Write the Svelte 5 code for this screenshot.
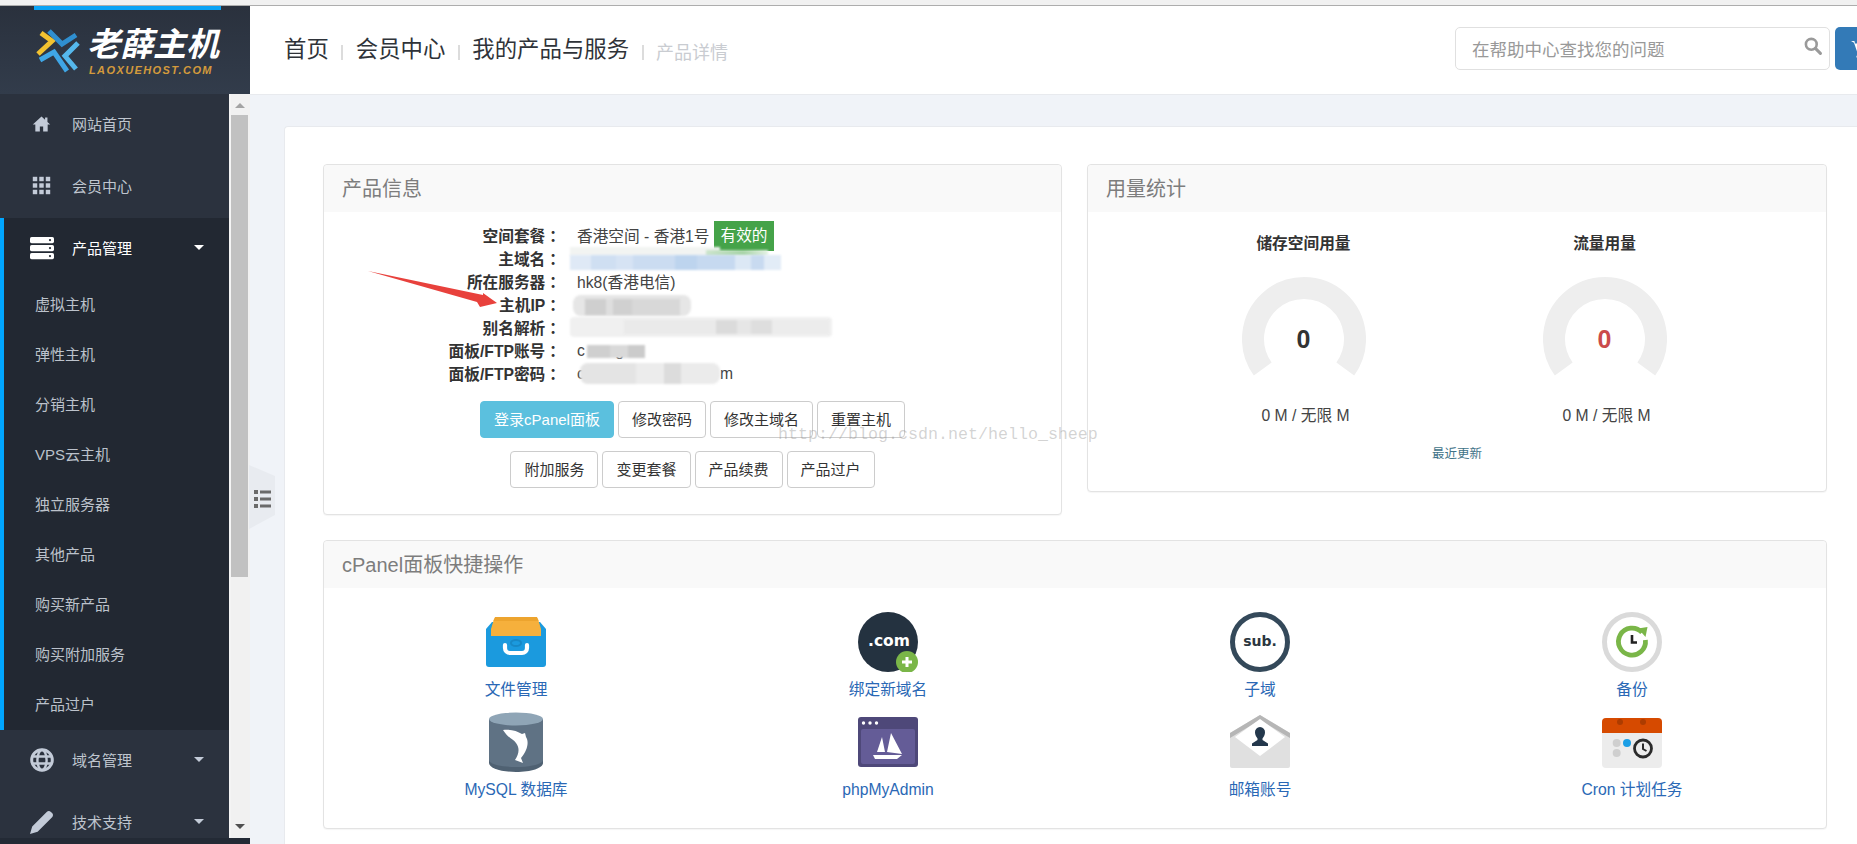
<script>
  const subs = ['虚拟主机','弹性主机','分销主机','VPS云主机','独立服务器','其他产品','购买新产品','购买附加服务','产品过户'];
  const info = [
    ['空间套餐','香港空间 - 香港1号',true],
    ['主域名','',false],
    ['所在服务器','hk8(香港电信)',false],
    ['主机IP','',false],
    ['别名解析','',false],
    ['面板/FTP账号','c       g',false],
    ['面板/FTP密码','c                               m',false]
  ];
  const row1 = ['修改密码','修改主域名','重置主机'];
  const row2 = ['附加服务','变更套餐','产品续费','产品过户'];
  const gauges = [
    {t:'储存空间用量',red:false},
    {t:'流量用量',red:true}
  ];
  const r = 51;
  const a0 = 144*Math.PI/180, a1 = 36*Math.PI/180;
  const arcPath = `M ${62+r*Math.cos(a0)} ${62+r*Math.sin(a0)} A ${r} ${r} 0 1 1 ${62+r*Math.cos(a1)} ${62+r*Math.sin(a1)}`;
</script>

<div class="page">
  <div class="strip"></div>
  <div class="body">
    <aside class="side">
      <div class="brand">
        <div class="brandbar"></div>
        <svg class="mark" viewBox="0 0 50 50" width="50" height="50" aria-hidden="true">
          <polyline points="8,5 19,13 5,26" fill="none" stroke="#f2c230" stroke-width="5"/>
          <polyline points="16,3 29,16 43,7" fill="none" stroke="#2f8fd0" stroke-width="5"/>
          <polyline points="45,15 32,28 43,41" fill="none" stroke="#55b8ec" stroke-width="5"/>
          <polyline points="7,32 21,24 34,43" fill="none" stroke="#3fa6e6" stroke-width="5"/>
        </svg>
        <div class="brandtext">
          <div class="bt1">老薛主机</div>
          <div class="bt2">LAOXUEHOST.COM</div>
        </div>
      </div>
      <div class="navwrap">
        <nav class="nav">
          <a class="row">
            <svg class="ic" viewBox="0 0 24 24" aria-hidden="true"><path d="M12 3 1 13.2h3.2V22h5.7v-6.2h4.2V22h5.700v-8.800H23L19.500 10V4.500h-3v2.700z" fill="#c3cbd8"/></svg>
            <span>网站首页</span>
          </a>
          <a class="row">
            <svg class="ic" viewBox="0 0 24 24" aria-hidden="true"><g fill="#c3cbd8"><rect x="1" y="1" width="5.6" height="5.6"/><rect x="9.2" y="1" width="5.6" height="5.6"/><rect x="17.4" y="1" width="5.6" height="5.6"/><rect x="1" y="9.2" width="5.6" height="5.6"/><rect x="9.2" y="9.2" width="5.6" height="5.6"/><rect x="17.4" y="9.2" width="5.6" height="5.6"/><rect x="1" y="17.4" width="5.6" height="5.6"/><rect x="9.2" y="17.4" width="5.6" height="5.6"/><rect x="17.4" y="17.4" width="5.6" height="5.6"/></g></svg>
            <span>会员中心</span>
          </a>
          <div class="active">
            <a class="row cur">
              <svg class="ic big" viewBox="0 0 24 22" aria-hidden="true"><g fill="#fff"><rect x="0" y="0" width="24" height="6.2" rx="1.6"/><rect x="0" y="8" width="24" height="6.2" rx="1.6"/><rect x="0" y="16" width="24" height="6.2" rx="1.6"/></g><g fill="#222832"><circle cx="20" cy="3.1" r="1.1"/><circle cx="20" cy="11.1" r="1.1"/><circle cx="20" cy="19.1" r="1.1"/></g></svg>
              <span>产品管理</span>
              <i class="caret white"></i>
            </a>
            {#each subs as s}
              <a class="sub">{s}</a>
            {/each}
          </div>
          <a class="row">
            <svg class="ic big" viewBox="0 0 24 24" aria-hidden="true"><circle cx="12" cy="12" r="10.3" fill="none" stroke="#c3cbd8" stroke-width="3"/><ellipse cx="12" cy="12" rx="4.6" ry="10" fill="none" stroke="#c3cbd8" stroke-width="2.4"/><path d="M2 8.5h20M2 15.5h20" stroke="#c3cbd8" stroke-width="2.4"/></svg>
            <span>域名管理</span>
            <i class="caret"></i>
          </a>
          <a class="row">
            <svg class="ic big" viewBox="0 0 24 24" aria-hidden="true"><path d="M0 24l2.200-7.600L16.700 1.900c1.200-1.200 3-1.200 4.200 0l1.200 1.200c1.200 1.200 1.200 3 0 4.200L7.600 21.800z" fill="#c3cbd8"/></svg>
            <span>技术支持</span>
            <i class="caret"></i>
          </a>
        </nav>
        <div class="sb">
          <i class="up"></i>
          <div class="thumb"></div>
          <i class="down"></i>
        </div>
      </div>
      <div class="sidefoot"></div>
    </aside>

    <main class="main">
      <header class="head">
        <div class="crumbs">
          <a>首页</a><i></i><a>会员中心</a><i></i><a>我的产品与服务</a><i></i><span>产品详情</span>
        </div>
        <div class="search">
          <span class="ph">在帮助中心查找您的问题</span>
          <svg viewBox="0 0 18 18" width="18" height="18" aria-hidden="true"><circle cx="7.3" cy="7.3" r="5.4" fill="none" stroke="#9a9a9a" stroke-width="2.6"/><path d="M11.4 11.4 16.4 16.4" stroke="#9a9a9a" stroke-width="3" stroke-linecap="round"/></svg>
        </div>
        <button class="cart" aria-label="cart">
          <svg viewBox="0 0 20 18" width="20" height="18" aria-hidden="true"><path d="M0 1h3.400l.6 2.400H19l-2 8H6L3 2.800M7 15a1.600 1.600 0 1 0 .1 0zM15 15a1.600 1.600 0 1 0 .1 0z" fill="#fff"/></svg>
        </button>
      </header>

      <div class="wrap">
        <div class="handle">
          <svg viewBox="0 0 26 64" width="26" height="64" aria-hidden="true">
            <path d="M0 0 26 11V50L0 64z" fill="#e8ebf0"/>
            <g fill="#6a6a6a"><rect x="5" y="25" width="4" height="4"/><rect x="5" y="32" width="4" height="4"/><rect x="5" y="39" width="4" height="4"/><rect x="11" y="25.500" width="11" height="3"/><rect x="11" y="32.500" width="11" height="3"/><rect x="11" y="39.500" width="11" height="3"/></g>
          </svg>
        </div>
        <div class="card">
          <div class="top">
            <section class="panel">
              <h3>产品信息</h3>
              <div class="infobody">
                <div class="info">
                  {#each info as [k, v, badge]}
                    <div class="irow">
                      <b>{k}<span class="colon">：</span></b>
                      <span class="v">{v}{#if badge}<em>有效的</em>{/if}</span>
                    </div>
                  {/each}
                  <div class="m host-top"></div>
                  <div class="m host-green"></div>
                  <div class="m host"></div>
                  <div class="m ip2"></div>
                  <div class="m ip"></div>
                  <div class="m alias2"></div>
                  <div class="m alias"></div>
                  <div class="m acct"></div>
                  <div class="m pwd"></div>
                </div>
                <div class="btns">
                  <button class="btn pri">登录cPanel面板</button>
                  {#each row1 as b}<button class="btn">{b}</button>{/each}
                </div>
                <div class="btns second">
                  {#each row2 as b}<button class="btn">{b}</button>{/each}
                </div>
              </div>
            </section>

            <section class="panel">
              <h3>用量统计</h3>
              <div class="usage">
                <div class="gauges">
                  {#each gauges as g}
                    <div class="g">
                      <h4>{g.t}</h4>
                      <svg viewBox="0 0 124 124" width="124" height="124" aria-hidden="true">
                        <path d={arcPath} fill="none" stroke="#eeeeee" stroke-width="22"/>
                      </svg>
                      <div class="num" class:red={g.red}>0</div>
                      <p>0 M / 无限 M</p>
                    </div>
                  {/each}
                </div>
                <a class="upd">最近更新</a>
              </div>
            </section>
          </div>

          <section class="panel quick">
            <h3>cPanel面板快捷操作</h3>
            <div class="grid">
              <a class="tool">
                <svg viewBox="0 0 60 60" width="60" height="60" aria-hidden="true">
                  <path d="M0 17 6 10h48l6 7v35a3 3 0 0 1-3 3H3a3 3 0 0 1-3-3z" fill="#1b9ade"/>
                  <path d="M8 7 10 5h40l2 2 3 10v7H5v-7z" fill="#f6b03c"/>
                  <path d="M9 5h42l1.500 4h-45z" fill="#eda42e"/>
                  <path d="M19 33v3a5 5 0 0 0 5 5h12a5 5 0 0 0 5-5v-3" fill="none" stroke="#fff" stroke-width="4.200" stroke-linecap="round"/>
                  <ellipse cx="30" cy="31" rx="5" ry="3" fill="none" stroke="#1788c6" stroke-width="2"/>
                </svg>
                <span>文件管理</span>
              </a>
              <a class="tool">
                <svg viewBox="0 0 60 60" width="60" height="60" aria-hidden="true">
                  <circle cx="30" cy="30" r="30" fill="#243240"/>
                  <text x="31" y="34" text-anchor="middle" class="svgt" fill="#fff" font-size="15.500">.com</text>
                  <circle cx="49" cy="50" r="11" fill="#7ab648"/>
                  <path d="M49 45v10M44 50h10" stroke="#fff" stroke-width="3"/>
                </svg>
                <span>绑定新域名</span>
              </a>
              <a class="tool">
                <svg viewBox="0 0 60 60" width="60" height="60" aria-hidden="true">
                  <circle cx="30" cy="30" r="27.500" fill="#fff" stroke="#34495a" stroke-width="5"/>
                  <text x="30" y="34" text-anchor="middle" class="svgt" fill="#2b3640" font-size="14">sub.</text>
                </svg>
                <span>子域</span>
              </a>
              <a class="tool">
                <svg viewBox="0 0 60 60" width="60" height="60" aria-hidden="true">
                  <circle cx="30" cy="30" r="27.500" fill="#fff" stroke="#dadada" stroke-width="5"/>
                  <path d="M40 20.500A13.500 13.500 0 1 0 43.400 28" fill="none" stroke="#7ab648" stroke-width="4.800"/>
                  <path d="M36 16.500 45.500 15 43.500 25z" fill="#7ab648"/>
                  <path d="M30 23v7.500h5" fill="none" stroke="#222" stroke-width="2.600"/>
                </svg>
                <span>备份</span>
              </a>
              <a class="tool">
                <svg viewBox="0 0 60 60" width="60" height="60" aria-hidden="true">
                  <path d="M3 7h54v44c0 5-12 9-27 9S3 56 3 51z" fill="#4f6172"/>
                  <path d="M3 7h54v41c0 4-12 7-27 7S3 52 3 48z" fill="#5f7284"/>
                  <ellipse cx="30" cy="7" rx="27" ry="6.500" fill="#8fa5b6"/>
                  <path d="M17 18C24 17 31 19 36 22L39 21 40 25C43 29 42 38 35 46L37 51 29 48C33 42 34 36 30 31 27 27 22 26 17 18z" fill="#fff"/>
                </svg>
                <span>MySQL 数据库</span>
              </a>
              <a class="tool">
                <svg viewBox="0 0 60 60" width="60" height="60" aria-hidden="true">
                  <rect x="0" y="5" width="60" height="50" rx="3" fill="#4e4879"/>
                  <rect x="3" y="17" width="54" height="35" rx="2" fill="#645c97"/>
                  <g fill="#fff"><circle cx="5.500" cy="11" r="1.700"/><circle cx="12" cy="11" r="1.700"/><circle cx="18.500" cy="11" r="1.700"/>
                  <path d="M33 21 44 42 29 40zM24 25 27 40 19 40zM15 43H44L39 47H17z"/></g>
                </svg>
                <span>phpMyAdmin</span>
              </a>
              <a class="tool">
                <svg viewBox="0 0 60 60" width="60" height="60" aria-hidden="true">
                  <path d="M30 3 60 21v33a2 2 0 0 1-2 2H2a2 2 0 0 1-2-2V21z" fill="#e0e0e0"/>
                  <path d="M30 3 60 21v5L30 8 0 26v-5z" fill="#b6b6b6"/>
                  <path d="M30 7 55 25 30 44 5 25z" fill="#fff"/>
                  <path d="M30 15a5 5 0 0 1 5 5.500c0 2.500-1.500 4.500-2.500 6v1.500l5.500 3.500v2.500H22v-2.500l5.500-3.500V26.500c-1-1.500-2.500-3.500-2.500-6A5 5 0 0 1 30 15z" fill="#24384c"/>
                </svg>
                <span>邮箱账号</span>
              </a>
              <a class="tool">
                <svg viewBox="0 0 60 60" width="60" height="60" aria-hidden="true">
                  <rect x="0" y="6" width="60" height="50" rx="4" fill="#ececec"/>
                  <path d="M0 21V10a4 4 0 0 1 4-4h52a4 4 0 0 1 4 4v11z" fill="#d64a00"/>
                  <circle cx="18" cy="10" r="3" fill="#ad3c00"/><circle cx="41" cy="10" r="3" fill="#ad3c00"/>
                  <circle cx="14.700" cy="31" r="4" fill="#cfcfcf"/><circle cx="14.700" cy="41" r="4" fill="#cfcfcf"/>
                  <circle cx="25" cy="31" r="4" fill="#1c9fe6"/>
                  <circle cx="41" cy="36.500" r="8.500" fill="none" stroke="#2a2a2a" stroke-width="2.800"/>
                  <path d="M41 31.500v5.500l3.500 2" fill="none" stroke="#2a2a2a" stroke-width="2"/>
                </svg>
                <span>Cron 计划任务</span>
              </a>
            </div>
          </section>
        </div>
      </div>
    </main>
  </div>

  <svg class="arrow" viewBox="0 0 140 40" width="140" height="40" aria-hidden="true">
    <path d="M0 0 115 24 115 22 129 32 112 36 109 31z" fill="#e8413c"/>
  </svg>
  <div class="wm">http://blog.csdn.net/hello_sheep</div>
</div>

<style>
  :global(body){margin:0;font-family:"Liberation Sans","Noto Sans CJK SC",sans-serif;}
  *{box-sizing:border-box;}
  a{text-decoration:none;}
  .page{position:relative;width:1857px;height:844px;overflow:hidden;display:flex;flex-direction:column;background:#fff;}
  .strip{height:6px;flex:none;background:#f1f1f1;border-bottom:1px solid #adadad;}
  .body{flex:1;display:flex;min-height:0;}

  .side{width:250px;flex:none;display:flex;flex-direction:column;background:#2b323e;}
  .brand{position:relative;height:88px;flex:none;background:linear-gradient(180deg,#2a313d,#323c4b);display:flex;align-items:flex-start;padding:20px 0 0 33px;gap:4px;}
  .brandbar{position:absolute;left:34px;top:0;width:187px;height:4px;background:#0aa3f5;}
  .mark{flex:none;margin-top:2px;}
  .brandtext{display:flex;flex-direction:column;}
  .bt1{font-size:33px;line-height:36px;font-weight:700;font-style:italic;color:#fff;white-space:nowrap;margin-top:1px;}
  .bt2{font-size:11px;line-height:12px;font-weight:700;font-style:italic;color:#d39a3c;letter-spacing:1.400px;white-space:nowrap;margin:1px 0 0 2px;}

  .navwrap{height:744px;flex:none;display:flex;}
  .nav{width:229px;flex:none;overflow:hidden;background:#2b323e;}
  .row{height:62px;display:flex;align-items:center;padding:0 0 3px 32px;position:relative;color:#bfc5ce;font-size:15px;}
  .row span{position:absolute;left:72px;}
  .row.cur{color:#fff;}
  .ic{width:19px;height:19px;flex:none;}
  .ic.big{width:24px;height:24px;margin-left:-2px;}
  .caret{position:absolute;left:194px;top:27px;width:0;height:0;border-left:5.500px solid transparent;border-right:5.500px solid transparent;border-top:5.500px solid #c3cbd8;}
  .caret.white{border-top-color:#fff;}
  .active{background:#222832;border-left:4px solid #00a6ff;height:512px;}
  .active .row{margin-left:-4px;}
  .sub{display:block;height:50px;line-height:50px;padding-left:31px;color:#bcc2cb;font-size:15px;}
  .sb{width:21px;flex:none;background:#f1f1f1;border-left:2px solid #f4f4f4;position:relative;padding:21px 2px 0 0;}
  .thumb{height:462px;background:#c1c1c1;}
  .up,.down{position:absolute;left:4px;width:0;height:0;border-left:5px solid transparent;border-right:5px solid transparent;}
  .up{top:9px;border-bottom:5px solid #a3a3a3;}
  .down{top:730px;border-top:5px solid #505050;}
  .sidefoot{flex:1;background:#232a35;}

  .main{flex:1;min-width:0;display:flex;flex-direction:column;background:#f0f3f8;position:relative;}
  .head{height:89px;flex:none;background:#fff;border-bottom:1px solid #e8eaee;display:flex;align-items:center;padding-left:34px;}
  .crumbs{display:flex;align-items:center;gap:12.500px;flex:1;}
  .crumbs a{font-size:22.400px;color:#2f3339;line-height:30px;}
  .crumbs i{width:2px;height:15px;background:#dcdcdc;margin-top:4px;}
  .crumbs span{font-size:18px;color:#c9ccd1;margin-top:1px;}
  .search{width:375px;height:43px;margin-top:-3px;flex:none;border:1px solid #e0e0e0;border-radius:5px;display:flex;align-items:center;justify-content:space-between;padding:0 7px 0 16px;background:#fff;}
  .ph{font-size:17.500px;color:#999;white-space:nowrap;}
  .search svg{margin-top:-5px;}
  .cart{width:40px;height:43px;margin:-3px -18px 0 5px;flex:none;border:0;border-radius:5px 0 0 5px;background:#337ab7;padding:0 0 0 16px;display:flex;align-items:center;}

  .wrap{flex:1;min-height:0;padding:31px 0 0 34px;position:relative;}
  .handle{position:absolute;left:-1px;top:370px;width:26px;height:64px;}
  .card{height:100%;background:#fff;border-left:1px solid #e8eaee;border-top:1px solid #e8eaee;border-radius:4px 0 0 0;padding:37px 30px 0 38px;}
  .top{display:grid;grid-template-columns:739px 740px;gap:25px;align-items:start;}
  .panel{border:1px solid #e3e3e3;border-radius:4px;background:#fff;box-shadow:0 1px 1px rgba(0,0,0,.04);}
  h3{margin:0;height:47px;line-height:48px;padding-left:18px;font-size:20px;font-weight:400;color:#7d7d7d;background:#f9f9f9;border-radius:4px 4px 0 0;}

  .infobody{padding:12px 0 26px;}
  .info{position:relative;}
  .irow{height:23px;display:grid;grid-template-columns:237px 1fr;column-gap:16px;align-items:center;}
  .irow b{text-align:right;font-size:15.700px;font-weight:700;color:#333;white-space:nowrap;}
  .colon{font-family:"Noto Sans CJK TC",sans-serif;}
  .v{font-size:15.700px;color:#444;display:flex;align-items:center;gap:5px;white-space:pre;}
  .v em{font-style:normal;color:#fff;background:#45a349;height:30px;line-height:30px;padding:0 6px;margin:-4px 0;}
  .m{position:absolute;filter:blur(1px);}
  .host-top{left:246px;top:23px;width:150px;height:9px;background:#f2f4f2;}
  .host-green{left:382px;top:26px;width:62px;height:6px;background:linear-gradient(90deg,#cde5cd,#a8d4a8 60%,#e5f2e5);}
  .host{left:246px;top:31px;width:211px;height:15px;background:linear-gradient(90deg,#dfe9f6 0 10%,#cfdff2 10% 22%,#d6e3f4 22% 30%,#cbdcf1 30% 50%,#bdd4ee 50% 60%,#c6d9f0 60% 78%,#dce8f5 78% 86%,#c8daf0 86% 92%,#e2ecf7 92% 100%);}
  .ip2{left:249px;top:71px;width:118px;height:21px;background:#e6e6e6;border-radius:8px;}
  .ip{left:261px;top:75px;width:95px;height:16px;background:linear-gradient(90deg,#cfcfcf 0 22%,#dedede 22% 30%,#d0d0d0 30% 50%,#d8d8d8 50% 100%);}
  .alias2{left:246px;top:93px;width:262px;height:20px;background:#f0f0f0;border-radius:4px;}
  .alias{left:300px;top:96px;width:205px;height:14px;background:linear-gradient(90deg,#eaeaea 0 45%,#dbdbdb 45% 55%,#e6e6e6 55% 62%,#dedede 62% 72%,#ececec 72% 100%);}
  .acct{left:263px;top:121px;width:58px;height:13px;background:linear-gradient(90deg,#cfcfcf 0 40%,#d9d9d9 40% 70%,#cbcbcb 70% 100%);}
  .pwd{left:256px;top:139px;width:140px;height:21px;background:linear-gradient(90deg,#e4e4e4 0 40%,#ececec 40% 60%,#dcdcdc 60% 72%,#ebebeb 72% 100%);border-radius:8px;}

  .btns{display:flex;justify-content:center;gap:4px;margin-top:16px;}
  .btns.second{margin-top:13px;}
  .btn{height:37px;padding:0 13px;border:1px solid #ccc;border-radius:4px;background:#fff;font:15px/1 "Liberation Sans","Noto Sans CJK SC",sans-serif;color:#333;}
  .btn.pri{background:#5bc0de;border-color:#5bc0de;color:#fff;}

  .usage{padding:21px 0 27px;text-align:center;}
  .gauges{display:flex;justify-content:center;padding-right:6px;}
  .g{width:301px;display:flex;flex-direction:column;align-items:center;position:relative;}
  h4{margin:0 0 22px;font-size:15.700px;line-height:22px;font-weight:700;color:#333;}
  .g svg{display:block;}
  .num{position:absolute;top:91px;left:0;right:0;font-size:25px;line-height:30px;font-weight:700;color:#333;}
  .num.red{color:#cb4b4b;}
  .g p{margin:4px 0 0 4px;font-size:15.700px;line-height:22px;color:#444;}
  .upd{display:block;margin-top:17px;font-size:12.500px;line-height:20px;color:#3f7388;}

  .quick{margin-top:25px;height:289px;}
  .grid{display:grid;grid-template-columns:repeat(4,372px);padding:24px 0 0 6px;}
  .tool{height:100px;display:flex;flex-direction:column;align-items:center;color:#2a68b5;font-size:15.700px;}
  .tool svg{flex:none;}
  .tool span{margin-top:7px;line-height:22px;white-space:nowrap;}
  .svgt{font-family:"DejaVu Sans","Liberation Sans",sans-serif;font-weight:700;}

  .arrow{position:absolute;left:368px;top:271px;}
  .wm{position:absolute;left:778px;top:424px;font:16.670px/22px "Liberation Mono",monospace;color:rgba(140,140,140,.38);white-space:nowrap;pointer-events:none;}
</style>
